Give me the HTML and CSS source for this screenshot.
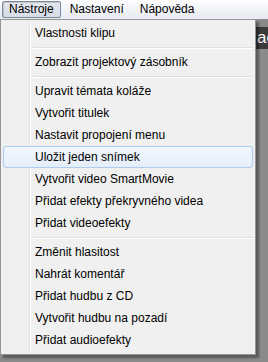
FILE: index.html
```html
<!DOCTYPE html>
<html>
<head>
<meta charset="utf-8">
<link rel="stylesheet" href="styles.css">
</head>
<body>
<div class="menubar">
  <span class="top-item pressed">Nástroje</span>
  <span class="top-item">Nastavení</span>
  <span class="top-item">Nápověda</span>
</div>
<div class="workspace">
  <div class="darkbar">ac</div>
  <div class="dropdown">
    <div class="item">Vlastnosti klipu</div>
    <div class="sep"></div>
    <div class="item">Zobrazit projektový zásobník</div>
    <div class="sep"></div>
    <div class="item">Upravit témata koláže</div>
    <div class="item">Vytvořit titulek</div>
    <div class="item">Nastavit propojení menu</div>
    <div class="item hover">Uložit jeden snímek</div>
    <div class="item">Vytvořit video SmartMovie</div>
    <div class="item">Přidat efekty překryvného videa</div>
    <div class="item">Přidat videoefekty</div>
    <div class="sep"></div>
    <div class="item">Změnit hlasitost</div>
    <div class="item">Nahrát komentář</div>
    <div class="item">Přidat hudbu z CD</div>
    <div class="item">Vytvořit hudbu na pozadí</div>
    <div class="item">Přidat audioefekty</div>
  </div>
</div>
</body>
</html>
```
FILE: styles.css
```css
html, body {
  margin: 0;
  padding: 0;
}
body {
  width: 268px;
  height: 362px;
  overflow: hidden;
  background: #8a8a8a;
  font-family: "Liberation Sans", Arial, sans-serif;
  font-size: 12px;
  color: #000;
}
.menubar {
  height: 19px;
  display: flex;
  align-items: center;
  padding-left: 2px;
  background: linear-gradient(#fdfdfe, #e6eaf1);
  box-sizing: border-box;
}
.top-item {
  height: 17px;
  line-height: 15px;
  padding: 0 6px;
  border: 1px solid transparent;
  border-radius: 2px;
  box-sizing: border-box;
  margin-right: 2px;
}
.top-item.pressed {
  border-color: #7b8a9e;
  background: linear-gradient(#e4e8ee, #d6dce6);
  box-shadow: inset 1px 1px 1px rgba(0,0,0,0.15);
}
.workspace {
  position: relative;
  display: flow-root;
  height: 343px;
}
.darkbar {
  margin-top: 8px;
  margin-left: 256px;
  height: 22px;
  background: #3a3a3a;
  color: #fff;
  font-size: 17px;
  line-height: 22px;
  padding-left: 1px;
  overflow: hidden;
}
.dropdown {
  position: absolute;
  left: 0;
  top: 0;
  width: 256px;
  box-sizing: border-box;
  border: 1px solid #979797;
  background: #f0f0f0;
  padding: 2px 2px 3px 2px;
  box-shadow: 3px 3px 2px rgba(0,0,0,0.35);
  background-image: linear-gradient(to right, transparent 28px, #e2e3e3 28px, #e2e3e3 29px, #ffffff 29px, #ffffff 30px, transparent 30px);
}
.item {
  height: 22px;
  line-height: 20px;
  padding-left: 31px;
  box-sizing: border-box;
  border: 1px solid transparent;
  border-radius: 3px;
  white-space: nowrap;
}
.item.hover {
  border-color: #aeccee;
  background: linear-gradient(#f2f7fd, #e4eef9);
}
.sep {
  height: 7px;
  margin-left: 30px;
  background: linear-gradient(transparent 3px, #e0e0e0 3px, #e0e0e0 4px, #ffffff 4px, #ffffff 5px, transparent 5px);
}
```
